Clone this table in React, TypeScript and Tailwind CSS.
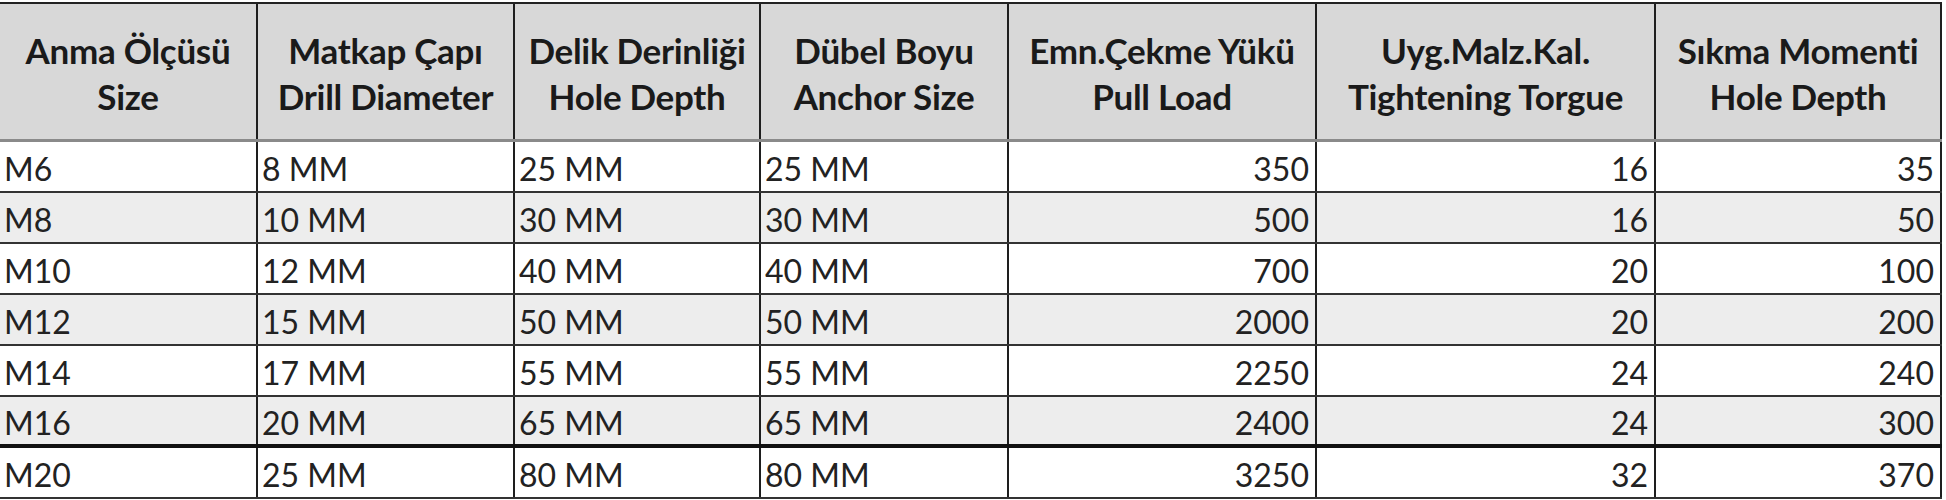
import React from "react";

const cols = ["w-[258px]", "w-[257px]", "w-[246px]", "w-[248px]", "w-[308px]", "w-[339px]", "w-[286px]"];

const head: [string, string][] = [
  ["Anma Ölçüsü", "Size"],
  ["Matkap Çapı", "Drill Diameter"],
  ["Delik Derinliği", "Hole Depth"],
  ["Dübel Boyu", "Anchor Size"],
  ["Emn.Çekme Yükü", "Pull Load"],
  ["Uyg.Malz.Kal.", "Tightening Torgue"],
  ["Sıkma Momenti", "Hole Depth"],
];

const rows = [
  ["M6", "8 MM", "25 MM", "25 MM", "350", "16", "35"],
  ["M8", "10 MM", "30 MM", "30 MM", "500", "16", "50"],
  ["M10", "12 MM", "40 MM", "40 MM", "700", "20", "100"],
  ["M12", "15 MM", "50 MM", "50 MM", "2000", "20", "200"],
  ["M14", "17 MM", "55 MM", "55 MM", "2250", "24", "240"],
  ["M16", "20 MM", "65 MM", "65 MM", "2400", "24", "300"],
  ["M20", "25 MM", "80 MM", "80 MM", "3250", "32", "370"],
];

export default function App() {
  return (
    <div className="w-[1946px] h-[500px] bg-white overflow-hidden text-[#1a1a1a] font-['Lato',sans-serif]">
      <div className="mt-[2px] w-[1942px] border-t-2 border-[#222]">
        <div className="flex h-[138px] bg-[#d8d8d8] border-b-[3px] border-[#8a8a8a]">
          {head.map(([a, b], i) => (
            <div
              key={i}
              className={`${cols[i]} shrink-0 border-r-2 border-[#1e1e1e] flex flex-col items-center justify-center text-[35px] font-bold leading-[46px] tracking-[-0.3px] pt-[2px]`}
            >
              <div>{a}</div>
              <div>{b}</div>
            </div>
          ))}
        </div>
        {rows.map((r, ri) => (
          <div
            key={ri}
            className={`flex h-[51px] ${ri % 2 === 1 ? "bg-[#ededed]" : "bg-white"} ${
              ri === 5 ? "border-b-4 border-[#111]" : "border-b-2 border-[#333]"
            }`}
          >
            {r.map((c, ci) => (
              <div
                key={ci}
                className={`${cols[ci]} shrink-0 border-r-2 border-[#1e1e1e] flex items-center text-[32px] text-[#222] pt-[5px] ${
                  ci >= 4 ? "justify-end pr-[6px]" : "pl-[4px]"
                }`}
              >
                {c}
              </div>
            ))}
          </div>
        ))}
      </div>
    </div>
  );
}
